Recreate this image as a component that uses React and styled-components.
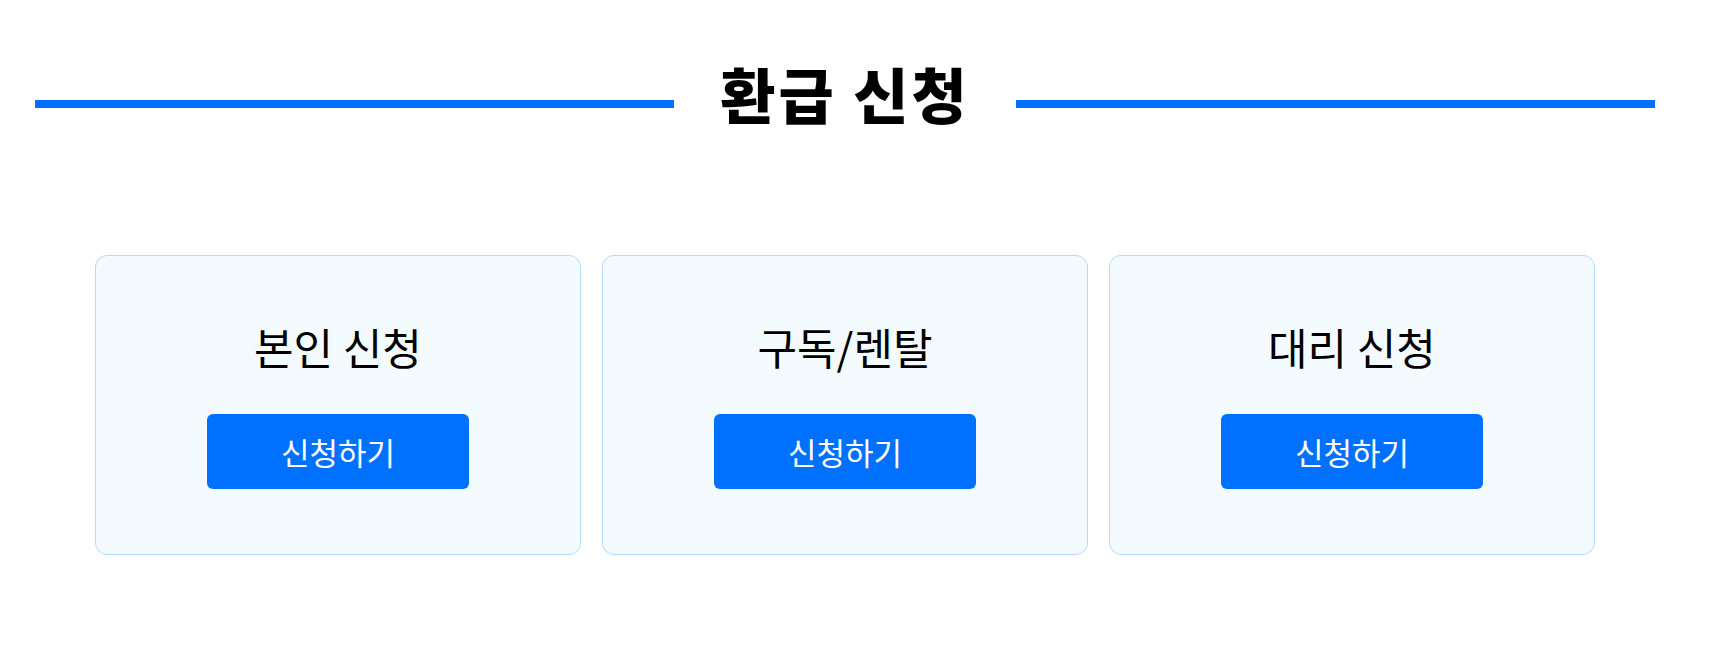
import React from 'react'
import styled, { createGlobalStyle } from 'styled-components'

const colors = {
  blue: '#0070ff',
  cardBg: '#f4fbff',
  cardBorder: '#b9d9fb',
  text: '#000000',
}

const GlobalStyle = createGlobalStyle`
  body {
    margin: 0;
    background: #ffffff;
    font-family: "Noto Sans CJK KR", "Noto Sans", sans-serif;
    color: ${colors.text};
  }
`

const Page = styled.main`
  width: 1620px;
  margin-left: 35px;
  padding-top: 57px;
  padding-bottom: 95px;
`

const Header = styled.header`
  display: flex;
  align-items: center;
`

const Line = styled.span`
  flex: 1;
  height: 8px;
  margin-top: 21px;
  background: ${colors.blue};
`

const Title = styled.h1`
  margin: 0;
  padding: 0 46px;
  font-size: 60px;
  font-weight: 900;
  letter-spacing: 3px;
  line-height: 1.2;
  white-space: nowrap;
`

const CardRow = styled.section`
  width: 1500px;
  margin: 126px auto 0;
  display: grid;
  grid-template-columns: repeat(3, 1fr);
  gap: 21px;
`

const Card = styled.div`
  box-sizing: border-box;
  height: 300px;
  padding-top: 65px;
  display: flex;
  flex-direction: column;
  align-items: center;
  background: ${colors.cardBg};
  border: 1px solid ${colors.cardBorder};
  border-radius: 12px;
`

const CardTitle = styled.h2`
  margin: 0 0 41px;
  font-size: 43px;
  font-weight: 400;
  line-height: 1.2;
`

const ApplyButton = styled.button`
  width: 262px;
  height: 75px;
  border: none;
  border-radius: 6px;
  background: ${colors.blue};
  color: #ffffff;
  font-family: inherit;
  font-size: 31px;
  font-weight: 400;
  cursor: pointer;
`

const options = ['본인 신청', '구독/렌탈', '대리 신청']

export default function App() {
  return (
    <>
      <GlobalStyle />
      <Page>
        <Header>
          <Line />
          <Title>환급 신청</Title>
          <Line />
        </Header>
        <CardRow>
          {options.map((label) => (
            <Card key={label}>
              <CardTitle>{label}</CardTitle>
              <ApplyButton type="button">신청하기</ApplyButton>
            </Card>
          ))}
        </CardRow>
      </Page>
    </>
  )
}
